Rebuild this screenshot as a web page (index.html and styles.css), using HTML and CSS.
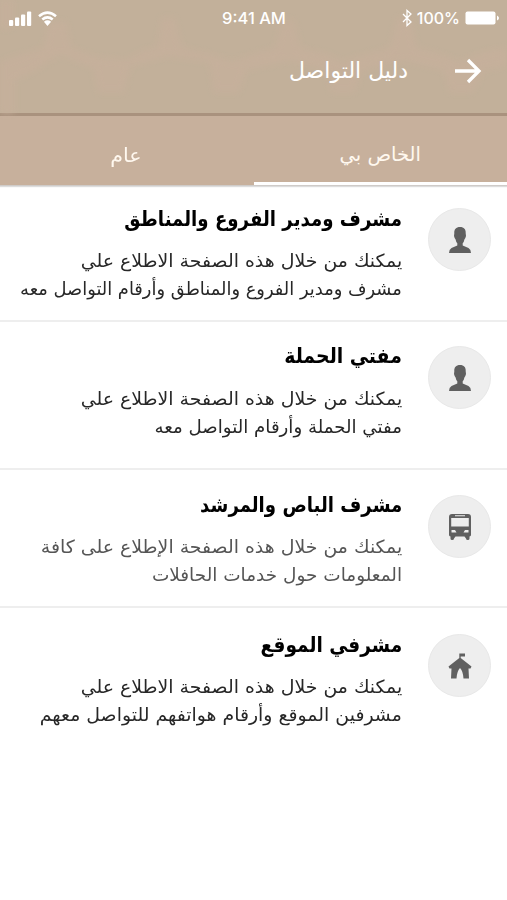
FILE: index.html
```html
<!DOCTYPE html>
<html lang="ar" dir="rtl">
<head>
<meta charset="utf-8">
<title>دليل التواصل</title>
<link rel="stylesheet" href="styles.css">
</head>
<body>
<header class="header">
  <svg class="pattern" width="507" height="113" viewBox="0 0 507 113" aria-hidden="true">
    <path d="M0 0H12V28H0ZM0 62L24 54L44 48L50 22H66L71 48L98 58L126 60L146 50L158 48L162 18H174L182 48L210 54L232 62L254 54L276 48L282 20H294L300 48L326 54L342 62L368 54L390 48L398 18H410L416 48L440 54L460 62L484 52L507 48V66L484 70L472 92H450L444 70L404 60L362 70L354 92H332L326 70L290 60L246 70L238 92H214L210 62L168 56L130 66L124 92H98L94 68L60 54L32 72L14 80V113H0Z"/>
  </svg>
  <div class="status" dir="ltr">
    <div class="status-side">
      <svg width="23" height="15" viewBox="0 0 23 15"><rect y="9" width="4.200" height="6" rx="1"/><rect x="6" y="6.500" width="4.200" height="8.500" rx="1"/><rect x="12" y="3.500" width="4.200" height="11.500" rx="1"/><rect x="18" y=".5" width="4.200" height="14.500" rx="1"/></svg>
      <svg class="wifi" width="19" height="15" viewBox="0 0 19 15"><path d="M1 5.200Q9.500-1.800 18 5.200M4.300 8.600Q9.500 4.300 14.700 8.600"/><path class="solid" d="M5.900 10.700Q9.500 8 13.100 10.700L9.500 15Z"/></svg>
    </div>
    <span class="time">9:41 AM</span>
    <div class="status-side end">
      <svg class="bluetooth" width="10" height="18" viewBox="0 0 10 18"><path d="M1 5l8 8-4 3.500V1.500L9 5 1 13"/></svg>
      <span class="percent">100%</span>
      <svg class="battery" width="34" height="14" viewBox="0 0 34 14"><rect x=".5" y=".5" width="30" height="13" rx="2"/><path d="M32 4.500q2 1 2 2.500t-2 2.500z"/></svg>
    </div>
  </div>
  <div class="bar">
    <svg class="arrow" width="28" height="26" viewBox="0 0 28 26"><path d="M1 13H25M14 2L25 13L14 24"/></svg>
    <h1><span class="line w-title">دليل التواصل</span></h1>
  </div>
</header>
<nav class="tabs">
  <a class="tab active"><span class="line w-mine">الخاص بي</span></a>
  <a class="tab"><span class="line w-general">عام</span></a>
</nav>
<main>
  <section class="row row-a">
    <div class="badge"><svg width="24" height="28" viewBox="0 0 24 28"><path d="M12 1C8 1 6 3.500 6.300 7.200L6 10Q6.500 12 7.600 13.500Q8 16 9.300 17.300V19.500L3.500 22Q1 23.300 1 27H23Q23 23.300 20.500 22L14.700 19.500V17.300Q16 16 16.400 13.500Q17.500 12 18 10L17.700 7.200C18 3.500 16 1 12 1Z"/></svg></div>
    <div class="copy">
      <h2><span class="line w-a0">مشرف ومدير الفروع والمناطق</span></h2>
      <p><span class="line w-wide">يمكنك من خلال هذه الصفحة الاطلاع علي</span><span class="line w-a2">مشرف ومدير الفروع والمناطق وأرقام التواصل معه</span></p>
    </div>
  </section>
  <section class="row row-b">
    <div class="badge"><svg width="24" height="28" viewBox="0 0 24 28"><path d="M12 1C8 1 6 3.500 6.300 7.200L6 10Q6.500 12 7.600 13.500Q8 16 9.300 17.300V19.500L3.500 22Q1 23.300 1 27H23Q23 23.300 20.500 22L14.700 19.500V17.300Q16 16 16.400 13.500Q17.500 12 18 10L17.700 7.200C18 3.500 16 1 12 1Z"/></svg></div>
    <div class="copy">
      <h2><span class="line w-b0">مفتي الحملة</span></h2>
      <p><span class="line w-wide">يمكنك من خلال هذه الصفحة الاطلاع علي</span><span class="line w-b2">مفتي الحملة وأرقام التواصل معه</span></p>
    </div>
  </section>
  <section class="row row-c">
    <div class="badge"><svg width="24" height="28" viewBox="0 0 24 28"><path fill-rule="evenodd" d="M4 1H20Q23 1 23 4V22Q23 23 21.500 23.500V25.500Q21.500 27 19.800 27T18 25.500L16.500 23.500H7.500L6 25.500Q6 27 4.200 27T2.500 25.500V23.500Q1 23 1 22V4Q1 1 4 1ZM7 2.300V3.300H17V2.300ZM3.200 5V13.500H20.800V5ZM3.500 17V19.500H8.500L7 17ZM20.500 17V19.500H15.500L17 17Z"/></svg></div>
    <div class="copy">
      <h2><span class="line w-c0">مشرف الباص والمرشد</span></h2>
      <p><span class="line w-wide">يمكنك من خلال هذه الصفحة الإطلاع على كافة</span><span class="line w-c2">المعلومات حول خدمات الحافلات</span></p>
    </div>
  </section>
  <section class="row row-d">
    <div class="badge"><svg width="24" height="28" viewBox="0 0 24 28"><path d="M11.300 1.500H17V4.500H12.700V6L23.500 14.500L22.500 16.500H20.500L21 26.500H15.500Q15 19 12 16Q9 19 8.500 26.500H3L3.500 16.500H1.500L.5 14.500L11.300 6Z"/></svg></div>
    <div class="copy">
      <h2><span class="line w-d0">مشرفي الموقع</span></h2>
      <p><span class="line w-wide">يمكنك من خلال هذه الصفحة الاطلاع علي</span><span class="line w-wide">مشرفين الموقع وأرقام هواتفهم للتواصل معهم</span></p>
    </div>
  </section>
</main>
</body>
</html>
```

FILE: styles.css
```css
* { box-sizing: border-box; }
body { margin: 0; width: 507px; height: 900px; overflow: hidden; background: #fff; font-family: "DejaVu Sans", sans-serif; }
h1, h2, p { margin: 0; font-weight: 400; }
svg { display: block; flex: none; fill: #fff; }
.header { position: relative; height: 116px; background: #c2b09a; border-bottom: 3px solid #a9927e; color: #fff; }
.pattern { position: absolute; top: 0; left: 0; fill: #c7b09c; opacity: .75; filter: blur(3px); }
.status { position: relative; display: flex; align-items: center; justify-content: space-between; height: 36px; padding: 0 8px 0 9px; font: 500 16px Inter, sans-serif; }
.time { font-size: 16.500px; }
.status-side { display: flex; align-items: center; width: 130px; gap: 6px; }
.end { justify-content: flex-end; gap: 5px; }
.wifi path { fill: none; stroke: #fff; stroke-width: 2.6; }
.wifi .solid { fill: #fff; stroke: none; }
.bluetooth path { fill: none; stroke: #fff; stroke-width: 1.3; }
.bar { position: relative; display: flex; align-items: center; height: 70px; padding-right: 25px; }
.arrow path { fill: none; stroke: #fff; stroke-width: 3.3; }
.bar h1 { margin-right: 46px; font-size: 22px; line-height: 28px; }
.tabs { display: flex; height: 70px; background: #c7b09c; border-bottom: 1px solid #cfcbc8; box-shadow: 0 1px 1px #ddd; color: #fff8ef; font-size: 19.500px; }
.tab { flex: 1; display: flex; justify-content: center; align-items: center; padding-top: 10px; }
.active { border-bottom: 3px solid #fff; padding-top: 11px; }
.line { display: block; width: max-content; white-space: nowrap; transform-origin: right center; }
.w-general { transform: scaleX(1.06); }
.w-a0 { transform: scaleX(.865); }
.w-b0 { transform: scaleX(.899); }
.w-c0 { transform: scaleX(.863); }
.w-d0 { transform: scaleX(.884); }
.w-wide { transform: scaleX(1.05); }
.w-a2 { transform: scaleX(.992); }
.w-b2 { transform: scaleX(1.01); }
.w-c2 { transform: scaleX(1.025); }
.row { display: flex; padding-right: 16px; border-bottom: 2px solid #eee; color: #272727; }
.badge { flex: none; display: flex; align-items: center; justify-content: center; width: 63px; height: 63px; margin-top: 4px; border-radius: 50%; background: #eee; border: 1px solid #e8e8e8; }
.badge svg { fill: #606060; }
.copy { margin-right: 26px; }
.copy h2 { color: #000; font-size: 21px; font-weight: 700; line-height: 30px; height: 43px; }
.copy p { font-size: 18px; line-height: 28px; }
.row-a { height: 136px; padding-top: 18px; }
.row-b { height: 148px; padding-top: 20px; }
.row-b h2 { line-height: 28px; }
.row-c { height: 138px; padding-top: 20px; color: #555; }
.row-c .badge { margin-top: 5px; }
.row-d { padding-top: 22px; border: 0; }
```
